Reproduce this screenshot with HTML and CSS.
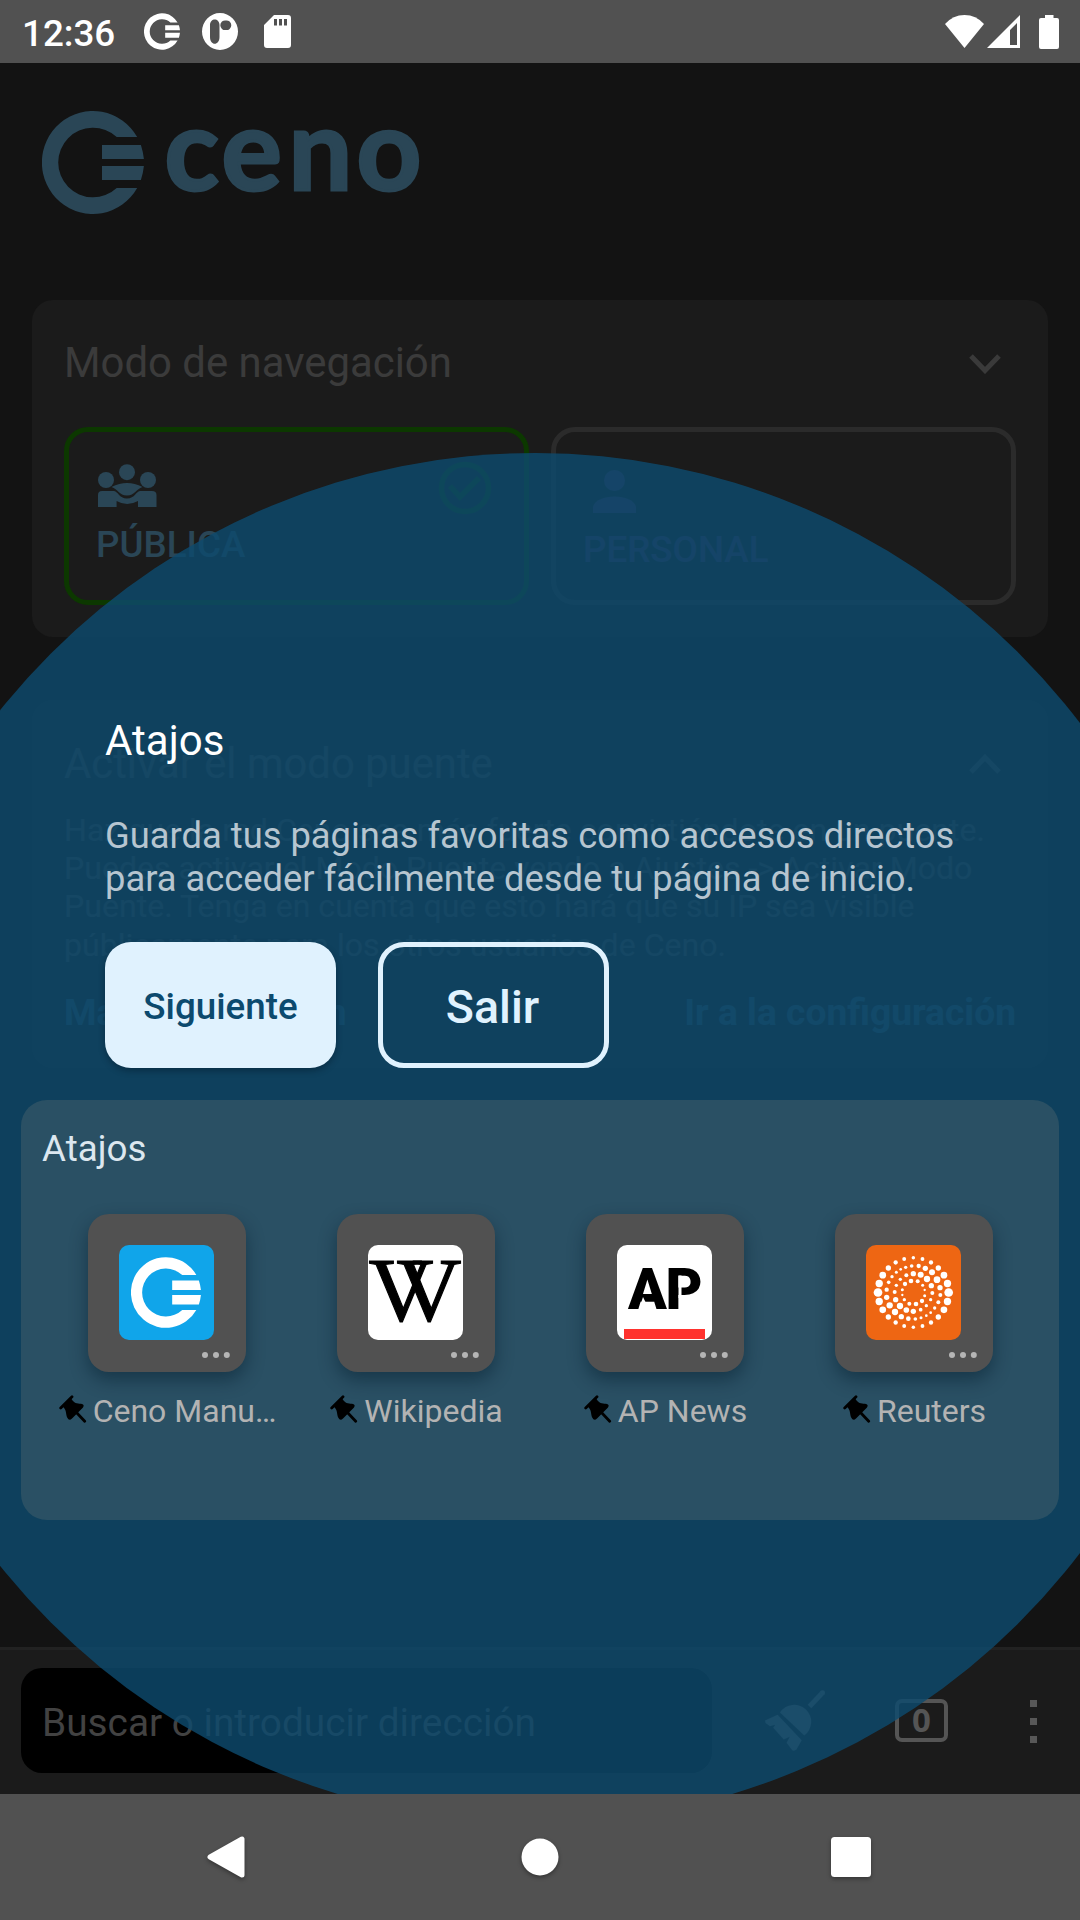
FILE: index.html
```html
<!DOCTYPE html>
<html lang="es">
<head>
<meta charset="utf-8">
<title>Ceno</title>
<link rel="stylesheet" href="styles.css">
</head>
<body>
<svg class="defs" width="0" height="0">
  <symbol id="ceno" viewBox="0 0 102 103">
    <path d="M95.2 26A51 51.5 0 1 0 95.2 77H74.7A34.8 34.8 0 1 1 74.7 26ZM60 34H98.9Q101.2 41 101.9 48H60ZM60 55H101.9Q101.2 62 98.9 69H60Z"/>
  </symbol>
  <symbol id="pin" viewBox="0 0 28 28">
    <path d="M1.7 13L13 1.7M17 17L25.7 26.3" fill="none" stroke="#000" stroke-width="2.8" stroke-linecap="round"/>
    <path d="M3.5 11.5C8 15 6.500 19 8.200 22.500Q10 26.500 13 23.600L24 12.500Q26 9.500 22 8.800C18 8.500 15 8.500 12 3.200Z"/>
  </symbol>
  <symbol id="dots" viewBox="0 0 28 6">
    <circle cx="3" cy="3" r="3"/><circle cx="14" cy="3" r="3"/><circle cx="24.800" cy="3" r="3"/>
  </symbol>
</svg>
<div class="phone">
  <header class="status">
    <span class="clock">12:36</span>
    <svg class="st-ceno" width="36" height="37"><use href="#ceno"/></svg>
    <svg class="st-p" width="36" height="37" viewBox="0 0 36 37"><path fill-rule="evenodd" d="M18 0A18 18.500 0 1 1 18 37A18 18.500 0 1 1 18 0ZM8 12V24C8 33 17.500 33 17.500 24V12C17.500 4.500 8 4.500 8 12ZM23.800 7.500A4.800 4.800 0 1 0 23.800 17A4.800 4.800 0 1 0 23.800 7.500Z"/></svg>
    <svg class="st-sd" width="27" height="33" viewBox="0 0 27 33"><path fill-rule="evenodd" d="M10 0H24Q27 0 27 3V30Q27 33 24 33H3Q0 33 0 30V10ZM10 4V10.500H13V4ZM15 4V10.500H18V4ZM20 4V10.500H23V4Z"/></svg>
    <span class="grow"></span>
    <svg width="39" height="33" viewBox="0 0 39 33"><path d="M0 9Q8 0 19.500 0T39 9L19.500 33Z"/></svg>
    <svg class="st-sig" width="33" height="33" viewBox="0 0 33 33"><path fill-rule="evenodd" d="M33 0V33H0ZM23 15V30H30V8Z"/></svg>
    <svg class="st-bat" width="20" height="34" viewBox="0 0 20 34"><path d="M6 0H14.500V3H18Q20 3 20 5V32Q20 34 18 34H2Q0 34 0 32V5Q0 3 2 3H6Z"/></svg>
  </header>

  <div class="app">
    <main class="home">
      <div class="brand">
        <svg width="102" height="103"><use href="#ceno"/></svg>
        <svg class="word" width="300" height="103"><text y="79" x="20.500 77.500 144.500 212.500">ceno</text></svg>
      </div>

      <section class="card mode">
        <div class="card-head"><h2>Modo de navegación</h2>
          <svg width="32" height="20" viewBox="0 0 32 20"><path d="M2 2L16 16.500L30 2"/></svg></div>
        <div class="options">
          <div class="option on">
            <svg class="people" width="59" height="43" viewBox="0 0 59 43"><circle cx="8" cy="16" r="8"/><circle cx="29" cy="8.200" r="8"/><circle cx="50" cy="16" r="8"/><path d="M13.500 23Q29 15 44.500 23C38 25 37 31.500 29 31.500C21 31.500 20 25 13.500 23ZM0 43V31Q0 27 4 27H15.500C20 27 21 34.500 29 34.500S38 27 42.500 27H54Q58.500 27 58.500 31V43H40V37Q29 43 18.600 37V43Z"/></svg>
            <span>PÚBLICA</span>
            <svg class="check" width="54" height="54" viewBox="0 0 54 54"><circle cx="27" cy="27" r="23.500"/><path d="M12 25L22 36L41 17"/></svg>
          </div>
          <div class="option off">
            <svg class="person" width="43" height="43" viewBox="0 0 43 43"><circle cx="21.500" cy="10.500" r="10.500"/><path d="M0 43V37C3 23 40 23 43 37V43Z"/></svg>
            <span>PERSONAL</span>
          </div>
        </div>
      </section>

      <section class="card bridge">
        <div class="card-head"><h2>Activar el modo puente</h2>
          <svg width="32" height="20" viewBox="0 0 32 20"><path d="M2 18L16 3.500L30 18"/></svg></div>
        <p>Haz que la red Ceno sea más fuerte convirtiéndote en un puente.<br>Puedes activar el Modo Puente yendo a Ajustes -&gt; Activar Modo<br>Puente. Tenga en cuenta que esto hará que su IP sea visible<br>públicamente para los otros usuarios de Ceno.</p>
        <div class="links"><span>Más información</span><span>Ir a la configuración</span></div>
      </section>

      <section class="shortcuts">
        <h3>Atajos</h3>
        <div class="tiles">
          <div class="item">
            <div class="tile"><div class="fav sky"><svg width="70" height="73"><use href="#ceno"/></svg></div><svg class="more" width="28" height="6"><use href="#dots"/></svg></div>
            <div class="label"><svg width="28" height="28"><use href="#pin"/></svg><span>Ceno Manu…</span></div>
          </div>
          <div class="item">
            <div class="tile"><div class="fav"><svg class="wiki" width="95" height="95"><text x="0.500 28.500" y="76">VV</text></svg></div><svg class="more" width="28" height="6"><use href="#dots"/></svg></div>
            <div class="label"><svg width="28" height="28"><use href="#pin"/></svg><span>Wikipedia</span></div>
          </div>
          <div class="item">
            <div class="tile"><div class="fav"><svg width="95" height="95"><text class="ap" x="11 48.500" y="63.500">AP</text><path d="M61.500 30.500H64.500V53H61.500ZM22 64L26 52L28.500 57L26.500 64Z" fill="#fff"/><path d="M7 84H88V94H7Z" fill="#ff322e"/></svg></div><svg class="more" width="28" height="6"><use href="#dots"/></svg></div>
            <div class="label"><svg width="28" height="28"><use href="#pin"/></svg><span>AP News</span></div>
          </div>
          <div class="item">
            <div class="tile"><div class="fav orange"><svg id="reuters" width="95" height="95" viewBox="138 135 285 285"></svg></div><svg class="more" width="28" height="6"><use href="#dots"/></svg></div>
            <div class="label"><svg width="28" height="28"><use href="#pin"/></svg><span>Reuters</span></div>
          </div>
        </div>
      </section>
    </main>

    <div class="toolbar">
      <div class="search">Buscar o introducir dirección</div>
      <svg class="broom" width="61" height="61" viewBox="0 0 61 61"><path d="M57.500 2.800L44.500 16.500" fill="none" stroke="#585858" stroke-width="5"/><circle cx="57.500" cy="2.800" r="2.500"/><path d="M15 22.500A17 17 0 1 1 39.300 45.500ZM0 30.500L12.600 24.800L36.700 50.200L31.500 59.500Q29 61.500 27 60L21.600 52.800L24.700 46.800L18.800 49.500L8.200 37.800L10.200 34.800L5 36.200L.5 33Z"/></svg>
      <div class="tabs">0</div>
      <div class="menu"><i></i><i></i><i></i></div>
    </div>

    <div class="halo"></div>
    <div class="prompt">
      <h1>Atajos</h1>
      <p>Guarda tus páginas favoritas como accesos directos<br>para acceder fácilmente desde tu página de inicio.</p>
      <div class="actions"><button class="next">Siguiente</button><button class="exit">Salir</button></div>
    </div>
  </div>

  <footer class="nav">
    <svg width="38" height="42" viewBox="0 0 38 42"><path d="M3 21L35 3V39Z" stroke="#fff" stroke-width="5" stroke-linejoin="round"/></svg>
    <svg class="nav-home" width="38" height="38" viewBox="0 0 38 38"><circle cx="19" cy="19" r="18.500"/></svg>
    <svg class="nav-recent" width="40" height="40" viewBox="0 0 40 40"><rect width="40" height="40" rx="3.500"/></svg>
  </footer>
</div>
<script src="dots.js"></script>
</body>
</html>
```
FILE: dots.js
```
// Reuters mark: four rings of dots, each entry is [x, y, radius].
var dots = [
  [275,198,5.5],[296,198,6.5],[316,205,8],[336,217,9],[351,239,10],[360,263,8],[361,285,6],[355,307,6],[344,324,5],[332,338,4],[319,347,4],[303,353,4.5],[286,357,5.5],[265,356,7],[244,350,8],[225,336,9.5],[209,316,9.5],[200,292,8],[200,269,6.5],[206,247,5.5],[216,230,5],[229,217,4.5],[242,208,4],[257,202,5],
  [280,221,8],[302,224,9],[321,237,9.5],[334,257,8],[337,279,6],[332,299,5],[319,317,5],[302,329,5.5],[280,334,8],[259,330,8.5],[240,318,9.5],[227,299,8],[224,276,6],[229,256,5],[241,238,5],[259,226,6],
  [273,243,7],[293,244,6],[308,256,4.5],[314,270,3.5],[314,287,4.5],[306,303,6.5],[288,312,7],[268,311,6],[253,299,5],[247,285,3.5],[247,269,4.5],[255,252,6.5]
];
var sizes = [13, 11, 10, 8, 6.5, 5.8, 5.2];
for (var i = 0; i < 24; i++) {
  var k = i % 12;
  var a = i * Math.PI / 12;
  dots.push([280 + 106 * Math.cos(a), 277.5 - 104 * Math.sin(a), sizes[k > 6 ? 12 - k : k]]);
}
var svg = document.getElementById('reuters');
dots.forEach(function (d) {
  var c = document.createElementNS('http://www.w3.org/2000/svg', 'circle');
  c.setAttribute('cx', d[0]);
  c.setAttribute('cy', d[1]);
  c.setAttribute('r', d[2]);
  svg.appendChild(c);
});
```
FILE: styles.css
```css
* { box-sizing: border-box; }
body, h1, h2, h3, p { margin: 0; }
h1, h2, h3 { font-weight: 400; }
body { background: #131313; font-family: Roboto, "Liberation Sans", sans-serif; }
svg { display: block; flex: none; }
.defs { position: absolute; }
.phone { width: 1080px; height: 1920px; display: flex; flex-direction: column; overflow: hidden; }

.status { height: 63px; flex: none; background: #515151; display: flex; align-items: center; padding: 0 21px 0 22px; color: #fff; fill: #fff; }
.clock { width: 92px; font-size: 36.750px; font-weight: 500; line-height: 62px; padding-top: 4px; white-space: nowrap; }
.st-ceno { margin-left: 30px; }
.st-p { margin-left: 22px; }
.st-sd { margin-left: 26px; }
.grow { flex: 1; }
.st-sig { margin-left: 3px; }
.st-bat { margin-left: 19px; }

.app { position: relative; flex: 1; overflow: hidden; display: flex; flex-direction: column; }
.home { flex: 1; padding: 48px 21px 0; }
.brand { display: flex; margin: 0 21px 86px; fill: #2a4656; }
.word { overflow: visible; font: 700 113px Lato, sans-serif; stroke: #2a4656; stroke-width: 3px; }

.card { margin: 0 11px; border-radius: 21px; background: #1b1b1b; padding: 0 32px; color: #3b3b3b; }
.mode { height: 337px; margin-bottom: 63px; }
.bridge { height: 368px; margin-bottom: 32px; }
.card-head { display: flex; justify-content: space-between; align-items: center; height: 127px; padding-right: 15px; }
.card-head h2 { font-size: 41.900px; line-height: 50px; padding-bottom: 2px; }
.card-head path { fill: none; stroke: #3a3a3a; stroke-width: 5; }
.bridge .card-head { height: 128px; }
.bridge .card-head h2 { padding-bottom: 0; font-size: 41.800px; }
.bridge p { font-size: 32.100px; line-height: 38.200px; margin-top: -17px; white-space: nowrap; }
.links { display: flex; justify-content: space-between; margin-top: 26px; font-size: 37.200px; line-height: 44px; font-weight: 700; color: #2a4656; white-space: nowrap; }

.options { display: grid; grid-template-columns: 1fr 1fr; gap: 22px; }
.option { position: relative; height: 178px; border: 5px solid #2b2b2b; border-radius: 24px; font-size: 36.750px; font-weight: 500; line-height: 44px; }
.on { border-color: #0c3800; padding: 32px 27px; color: #2a4656; fill: #2a4656; }
.off { padding: 37.500px 27px; color: #3a2b50; fill: #3a2b50; }
.option span { display: block; margin-top: 15.500px; }
.people { margin-left: 2px; }
.person { margin-left: 10px; }
.check { position: absolute; right: 32px; top: 29px; fill: none; stroke: #0c3800; stroke-width: 5.500; }

.shortcuts { position: relative; z-index: 2; height: 420px; border-radius: 26px; background: #2a5064; padding: 27px 21px; }
.shortcuts h3 { font-size: 36.750px; line-height: 44px; color: #dce7ef; }
.tiles { display: grid; grid-template-columns: repeat(4, 249px); margin-top: 43px; }
.item { display: flex; flex-direction: column; align-items: center; }
.tile { position: relative; width: 158px; height: 158px; border-radius: 21px; background: #515151; padding: 31px; box-shadow: 0 8px 18px rgba(0, 25, 40, .45); }
.fav { width: 95px; height: 95px; border-radius: 10px; overflow: hidden; background: #fff; display: flex; align-items: center; justify-content: center; }
.sky { background: #10a5ea; fill: #fff; }
.orange { background: #ee6613; fill: #fff; }
.wiki { font: 90px "Liberation Serif", serif; stroke: #000; stroke-width: 1.200px; }
.ap { font: 900 57px Roboto, sans-serif; }
.more { position: absolute; right: 16px; bottom: 14.500px; fill: #b5b5b5; }
.label { display: flex; gap: 6px; margin-top: 23px; padding-left: 2px; align-items: flex-start; font-size: 32px; line-height: 28px; color: #b3b3b3; white-space: nowrap; }
.label span { padding-top: 2px; }

.toolbar { height: 147px; flex: none; border-top: 3px solid #222; background: #1b1b1b; display: flex; align-items: center; padding: 0 0 3px 21px; fill: #585858; }
.search { width: 691px; height: 105px; border-radius: 21px; background: #000; padding-left: 21px; font-size: 38.800px; line-height: 109px; color: #424242; }
.broom { margin-left: 53px; }
.tabs { width: 53px; height: 43px; margin-left: 69px; border: 4px solid #555; border-radius: 7px; color: #555; font: 700 33px/34px "Noto Sans", sans-serif; text-align: center; }
.menu { display: flex; flex-direction: column; gap: 11px; margin-left: 82px; padding-top: 2px; }
.menu i { width: 7px; height: 7px; background: #585858; }

.halo { position: absolute; z-index: 1; left: -149.700px; top: 389.600px; width: 1370px; height: 1370px; border-radius: 50%; background: rgba(14, 74, 110, .82); }
.prompt { position: absolute; z-index: 3; left: 105px; top: 652px; }
.prompt h1 { font-size: 42px; line-height: 52px; color: #fff; }
.prompt p { margin-top: 47px; font-size: 36.350px; line-height: 43px; color: #b6c5d0; white-space: nowrap; }
.actions { display: flex; gap: 42px; margin-top: 42px; }
.actions button { width: 231px; height: 126px; border: 0; border-radius: 26px; padding: 2px 0 0; font-family: inherit; font-weight: 500; }
.next { background: #e0f2fe; color: #0c4a6e; font-size: 36.750px; box-shadow: 0 3px 6px rgba(0, 20, 35, .4); }
.actions .exit { background: none; border: 5px solid #e0f2fe; padding: 3px 2px 0 0; color: #e0f2fe; font-size: 46.500px; }

.nav { height: 126px; flex: none; background: #515151; display: flex; align-items: center; padding-left: 207px; fill: #fff; }
.nav svg { filter: drop-shadow(0 2px 2px rgba(0, 0, 0, .35)); }
.nav-home { margin-left: 276px; }
.nav-recent { margin-left: 272px; }
```
